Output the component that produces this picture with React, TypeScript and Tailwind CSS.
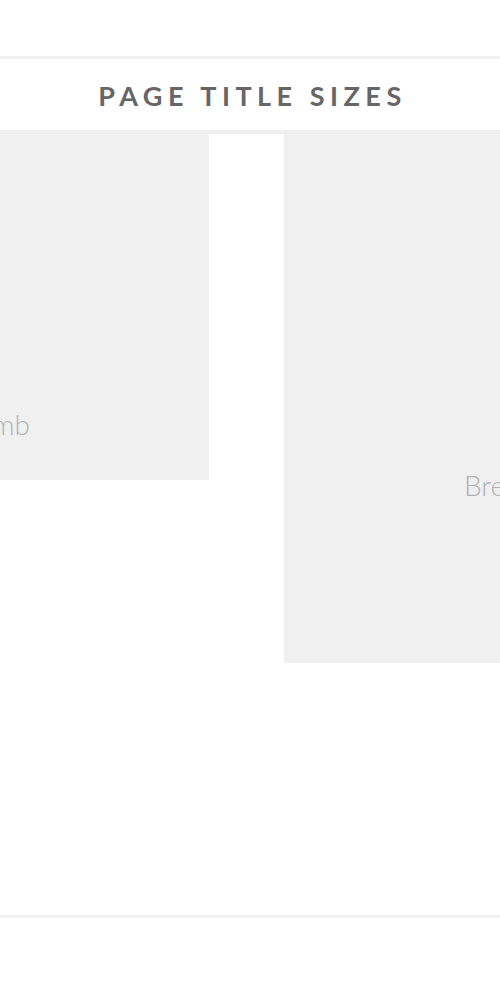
export default function App() {
  return (
    <div className="min-h-screen bg-white font-['Lato','Liberation_Sans',sans-serif]">
      <div className="h-[56px]" />
      <div className="h-[3px] bg-[#f0f0f0]" />

      <header className="flex h-[71px] items-center justify-center">
        <h2 className="pl-[5px] pt-[2px] text-[27px] font-bold uppercase leading-none tracking-[5.5px] text-[#666]">
          Page Title Sizes
        </h2>
      </header>

      <div className="h-[4px] bg-[#f0f0f0]" />

      <section className="flex h-[781px] items-start">
        <div className="flex h-[346px] w-[209px] shrink-0 overflow-hidden bg-[#f0f0f0]">
          <div className="mt-[270px] flex w-[30px] justify-end whitespace-nowrap">
            <span className="text-[28px] font-light leading-[40px] text-[#b3b3b3]">Breadcrumb</span>
          </div>
        </div>
        <div className="w-[75px] shrink-0" />
        <div className="h-[529px] flex-1 overflow-hidden bg-[#f0f0f0]">
          <div className="mt-[331px] pl-[180px] whitespace-nowrap">
            <span className="text-[28px] font-light leading-[40px] text-[#b3b3b3]">Breadcrumb</span>
          </div>
        </div>
      </section>

      <div className="h-[3px] bg-[#f0f0f0]" />
    </div>
  );
}
